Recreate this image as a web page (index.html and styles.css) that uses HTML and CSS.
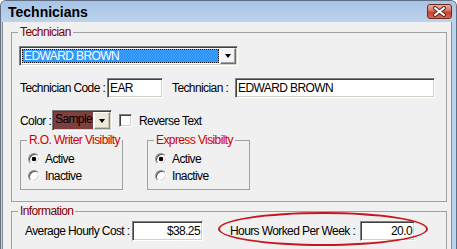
FILE: index.html
```html
<!DOCTYPE html>
<html>
<head>
<meta charset="utf-8">
<title>Technicians</title>
<link rel="stylesheet" href="styles.css">
</head>
<body>
<div class="window">
  <div class="titlebar">
    <span class="title">Technicians</span>
    <div class="close">
      <svg width="15" height="11" viewBox="0 0 15 11">
        <path d="M3 2 L12 9 M12 2 L3 9" stroke="#5a2a24" stroke-width="4" stroke-linecap="round" fill="none"/>
        <path d="M3 2 L12 9 M12 2 L3 9" stroke="#ffffff" stroke-width="2" stroke-linecap="round" fill="none"/>
      </svg>
    </div>
  </div>
  <div class="client">
    <fieldset class="group tech">
      <legend class="legend-dark">Technician</legend>
      <div class="combo main-combo">
        <div class="combo-sel">EDWARD BROWN</div>
        <div class="combo-btn"><span class="arrow"></span></div>
      </div>
      <div class="row row-code">
        <span class="lbl lbl-code">Technician Code :</span>
        <div class="field f-code">EAR</div>
        <span class="lbl lbl-tech">Technician :</span>
        <div class="field f-tech">EDWARD BROWN</div>
      </div>
      <div class="row row-color">
        <span class="lbl lbl-color">Color :</span>
        <div class="color-combo">
          <div class="sample">Sample</div>
          <div class="combo-btn beige"><span class="arrow"></span></div>
        </div>
        <span class="check"></span>
        <span class="lbl lbl-rev">Reverse Text</span>
      </div>
      <div class="vis-row">
        <fieldset class="group sub">
          <legend class="legend-red">R.O. Writer Visibilty</legend>
          <div class="radio-row"><span class="radio on"></span><span>Active</span></div>
          <div class="radio-row"><span class="radio"></span><span>Inactive</span></div>
        </fieldset>
        <fieldset class="group sub">
          <legend class="legend-red">Express Visibilty</legend>
          <div class="radio-row"><span class="radio on"></span><span>Active</span></div>
          <div class="radio-row"><span class="radio"></span><span>Inactive</span></div>
        </fieldset>
      </div>
    </fieldset>
    <fieldset class="group info">
      <legend class="legend-dark">Information</legend>
      <div class="row row-info">
        <span class="lbl lbl-cost">Average Hourly Cost :</span>
        <div class="field num f-cost">$38.25</div>
        <span class="lbl lbl-hours">Hours Worked Per Week :</span>
        <div class="field num f-hours">20.0</div>
      </div>
      <div class="highlight"></div>
    </fieldset>
  </div>
</div>
</body>
</html>
```

FILE: styles.css
```css
* { box-sizing: border-box; }
html, body { margin: 0; padding: 0; background: #ffffff; }
body {
  width: 457px;
  height: 249px;
  overflow: hidden;
  font-family: "Liberation Sans", Arial, sans-serif;
  font-size: 12px;
  letter-spacing: -0.6px;
  color: #000;
}
.window {
  width: 457px;
  height: 249px;
  display: flex;
  flex-direction: column;
  background: #bcd3ec;
  border: 1px solid #5f6f84;
  border-bottom: none;
  border-radius: 6px 6px 0 0;
  overflow: hidden;
}
.titlebar {
  height: 21px;
  flex: none;
  display: flex;
  align-items: center;
  justify-content: space-between;
  padding: 1px 4px 0 7px;
  background: linear-gradient(#a8c4e5, #bcd3ec);
}
.title {
  font-size: 14px;
  font-weight: bold;
  letter-spacing: 0;
  line-height: 16px;
  color: #000;
}
.close {
  width: 25px;
  height: 15px;
  margin-top: -1px;
  border: 1px solid #6e2a22;
  border-radius: 3px;
  background: linear-gradient(#eab0a2 0%, #d7705f 45%, #c4402f 55%, #d46a52 100%);
  display: flex;
  align-items: center;
  justify-content: center;
}
.client {
  flex: 1;
  margin: 0 4px 0 1px;
  border-left: 1px solid #8a8a8a;
  border-right: 1px solid #8a8a8a;
  background: #f0f0f0;
  padding: 3px 4px 0 8px;
  overflow: hidden;
}
.group {
  margin: 0;
  border: 1px solid #a0a0a0;
  min-width: 0;
}
.group legend {
  padding: 0 2px;
  line-height: 14px;
  white-space: nowrap;
}
.legend-dark { color: #800000; }
.legend-red { color: #cc0000; }
.tech {
  padding: 7px 6px 11px 6px;
}
.combo {
  display: flex;
  border: 1px solid;
  border-color: #808080 #ffffff #ffffff #808080;
  box-shadow: inset 1px 1px #404040, inset -1px -1px #d4d0c8;
  background: #fff;
}
.main-combo {
  width: 219px;
  height: 20px;
  margin-left: 1px;
  padding: 2px;
}
.combo-sel {
  flex: 1;
  border: 1px dotted #000;
  background: linear-gradient(#3399ff, #3399ff) padding-box, #ff9c00 border-box;
  color: #fff;
  line-height: 12px;
  padding-left: 1px;
  margin-right: 1px;
}
.combo-btn {
  width: 16px;
  flex: none;
  margin: -1px -1px -1px 0;
  background: #f4f4f4;
  border: 1px solid;
  border-color: #ffffff #707070 #707070 #ffffff;
  box-shadow: inset -1px -1px #a0a0a0;
  display: flex;
  align-items: center;
  justify-content: center;
}
.arrow {
  width: 1px;
  height: 0;
  border-left: 3px solid transparent;
  border-right: 3px solid transparent;
  border-top: 4px solid #000;
}
.row {
  display: flex;
  align-items: center;
}
.row-code { margin-top: 12px; }
.row-color { margin-top: 12px; }
.lbl { white-space: nowrap; flex: none; }
.lbl-code { width: 87px; margin-left: 2px; }
.lbl-tech { width: 63px; margin-left: 9px; }
.lbl-color { width: 32px; margin-left: 2px; }
.lbl-rev { margin-left: 7px; }
.field {
  height: 20px;
  border: 1px solid;
  border-color: #808080 #ffffff #ffffff #808080;
  box-shadow: inset 1px 1px #404040, inset -1px -1px #d4d0c8;
  background: #fff;
  padding: 0 2px;
  line-height: 18px;
  white-space: nowrap;
}
.f-code { width: 56px; }
.f-tech { width: 200px; }
.num { text-align: right; padding-right: 2px; }
.color-combo {
  width: 60px;
  height: 21px;
  display: flex;
  border: 1px solid;
  border-color: #808080 #ffffff #ffffff #808080;
  box-shadow: inset 1px 1px #404040, inset -1px -1px #d4d0c8;
  padding: 2px;
  background: #fff;
}
.sample {
  flex: 1;
  background: #7f3f3f;
  color: #000;
  line-height: 15px;
  padding-left: 1px;
  margin: -1px 1px -1px -1px;
}
.combo-btn.beige {
  background: #ece9d8;
  border-color: #ffffff #8a8a8a #8a8a8a #ffffff;
  box-shadow: inset -1px -1px #c8c4b0;
}
.check {
  width: 13px;
  height: 13px;
  margin-left: 7px;
  flex: none;
  border: 1px solid;
  border-color: #808080 #ffffff #ffffff #808080;
  box-shadow: inset 1px 1px #404040, inset -1px -1px #d4d0c8;
  background: #fff;
}
.vis-row {
  display: flex;
  gap: 24px;
  margin-top: 2px;
  margin-left: 2px;
}
.sub {
  width: 103px;
  padding: 3px 6px 5px 6px;
}
.radio-row {
  display: flex;
  align-items: center;
  height: 17px;
  margin-left: 1px;
}
.radio {
  width: 12px;
  height: 12px;
  flex: none;
  margin-right: 5px;
  border-radius: 50%;
  border: 1px solid;
  border-color: #909090 #ffffff #ffffff #909090;
  box-shadow: inset 1px 1px #505050, inset -1px -1px #d4d0c8;
  background: #fff;
}
.radio.on {
  background: radial-gradient(circle, #000 0, #000 2px, #fff 2.6px);
}
.info {
  position: relative;
  margin-top: 2px;
  padding: 3px 6px 20px 6px;
}
.lbl-cost { width: 107px; margin-left: 7px; }
.f-cost { width: 71px; }
.lbl-hours { width: 130px; margin-left: 27px; }
.f-hours { width: 55px; }
.highlight {
  position: absolute;
  left: 206px;
  top: -6px;
  width: 210px;
  height: 34px;
  border: 2px solid #c8161d;
  border-radius: 50%;
}
```
